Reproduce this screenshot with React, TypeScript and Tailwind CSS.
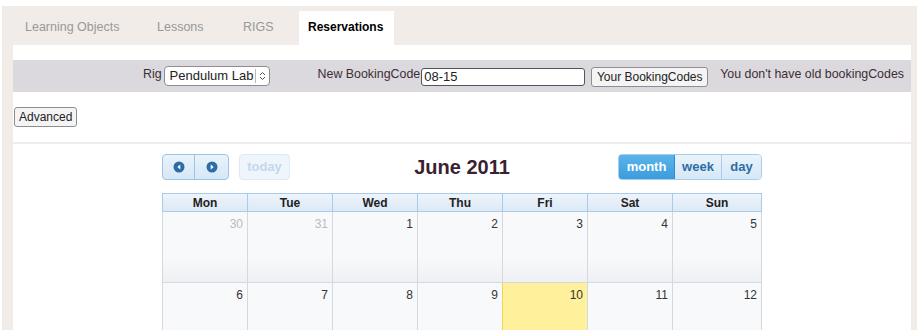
import React from "react";

const days = ["Mon", "Tue", "Wed", "Thu", "Fri", "Sat", "Sun"];
const week1 = [
  { n: 30, other: true },
  { n: 31, other: true },
  { n: 1 },
  { n: 2 },
  { n: 3 },
  { n: 4 },
  { n: 5 },
];
const week2 = [
  { n: 6 },
  { n: 7 },
  { n: 8 },
  { n: 9 },
  { n: 10, today: true },
  { n: 11 },
  { n: 12 },
];

function Cell({ n, other, today, last }: { n: number; other?: boolean; today?: boolean; last?: boolean }) {
  return (
    <div
      className={
        "h-[71px] border-b border-l border-[#d5d8dc] text-right pr-[4px] pt-[3px] text-[12px] " +
        (last ? "border-r " : "") +
        (today
          ? "bg-[#fff09c] border-[#f2d54a] "
          : "bg-[linear-gradient(to_bottom,#f8f9fb_62%,#eef1f4_100%)] ") +
        (other ? "text-[#bbbbbb]" : "text-[#333]")
      }
    >
      {n}
    </div>
  );
}

export default function App() {
  return (
    <div className="w-[922px] h-[330px] bg-white overflow-hidden font-['Liberation_Sans',Arial,sans-serif]">
      <div className="ml-[2px] mt-[6px] w-[915px] h-[324px] bg-[#f1ece8]">
        {/* tabs */}
        <div className="flex items-end h-[39px] pl-[14px]">
          <div className="w-[112px] h-[34px] pl-[9px] pt-[7px] text-[12.5px] text-[#999] whitespace-nowrap">Learning Objects</div>
          <div className="ml-[20px] w-[67px] h-[34px] pl-[9px] pt-[7px] text-[12.5px] text-[#999]">Lessons</div>
          <div className="ml-[19px] w-[47px] h-[34px] pl-[9px] pt-[7px] text-[12.5px] text-[#999]">RIGS</div>
          <div className="ml-[18px] w-[95px] h-[34px] pl-[9px] pt-[7px] bg-white text-[12px] text-black font-bold">Reservations</div>
        </div>
        {/* panel */}
        <div className="ml-[11px] w-[898px] h-[285px] bg-white pt-[15px]">
          <div className="h-[32px] bg-[#dbd9de] flex items-center justify-end pr-[7px] text-[12.4px] text-[#3b2e35]">
            <span className="-mt-[4px]">Rig</span>
            <div className="ml-[2px] w-[106px] h-[20px] border border-[#8e8e8e] rounded-[4px] bg-white flex items-center pl-[5px] text-[13px] text-[#222]">
              <span className="whitespace-nowrap">Pendulum Lab</span>
              <span className="ml-auto mr-[3px] h-[14px] border-l border-[#bbb] pl-[3px] flex items-center">
                <svg width="7" height="10" viewBox="0 0 7 10">
                  <path d="M1 4 L3.5 1.5 L6 4" fill="none" stroke="#555" strokeWidth="1" />
                  <path d="M1 6 L3.5 8.5 L6 6" fill="none" stroke="#555" strokeWidth="1" />
                </svg>
              </span>
            </div>
            <span className="ml-[48px] -mt-[4px]">New BookingCode</span>
            <div className="ml-[1px] w-[164px] h-[18px] border border-[#555] rounded-[3px] bg-white flex items-center pl-[2px] text-[13px] text-[#222] mt-[2px]">
              08-15
            </div>
            <div className="ml-[6px] w-[117px] h-[20px] border border-[#8e8e8e] rounded-[3px] bg-[#f4f4f4] flex items-center justify-center text-[12px] text-[#222] mt-[2px] whitespace-nowrap">
              Your BookingCodes
            </div>
            <span className="ml-[12px] -mt-[4px] whitespace-nowrap">You don't have old bookingCodes</span>
          </div>
          <div className="h-[50px] flex items-center pl-[1px]">
            <div className="h-[20px] px-[4px] border border-[#8e8e8e] rounded-[3px] bg-[#f4f4f4] flex items-center text-[12px] text-[#222]">
              Advanced
            </div>
          </div>
          <div className="h-[2px] bg-[#f1ece8]" />
          {/* calendar */}
          <div className="w-[600px] mx-auto mt-[10px]">
            <div className="relative h-[26px] flex items-center">
              <div className="flex h-[26px] border border-[#9ec5e6] rounded-[4px] bg-[linear-gradient(to_bottom,#e9f3fb,#d6e7f6)] overflow-hidden">
                <div className="w-[32px] flex items-center justify-center border-r border-[#9ec5e6]">
                  <svg width="12" height="12" viewBox="0 0 12 12">
                    <circle cx="6" cy="6" r="5.5" fill="#2d6ca6" />
                    <path d="M7.3 3.6 L4.3 6 L7.3 8.4 Z" fill="white" />
                  </svg>
                </div>
                <div className="w-[33px] flex items-center justify-center">
                  <svg width="12" height="12" viewBox="0 0 12 12">
                    <circle cx="6" cy="6" r="5.5" fill="#2d6ca6" />
                    <path d="M4.7 3.6 L7.7 6 L4.7 8.4 Z" fill="white" />
                  </svg>
                </div>
              </div>
              <div className="ml-[10px] h-[26px] w-[51px] border border-[#dde9f5] rounded-[4px] bg-[#eef5fb] flex items-center justify-center text-[13px] font-bold text-[#c3d8ea]">
                today
              </div>
              <div className="absolute left-0 right-0 text-center text-[20px] font-bold text-[#3c1f31] pointer-events-none">
                June 2011
              </div>
              <div className="ml-auto flex h-[26px] rounded-[4px] overflow-hidden border border-[#a9cdea] text-[13px] font-bold">
                <div className="w-[57px] -m-[1px] mr-0 border border-[#2f8ad2] rounded-l-[4px] bg-[linear-gradient(to_bottom,#5ab4ea,#3b9ddc)] text-white flex items-center justify-center">
                  month
                </div>
                <div className="w-[47px] bg-[linear-gradient(to_bottom,#e9f3fb,#d6e7f6)] text-[#2d6ca6] flex items-center justify-center border-r border-[#a9cdea]">
                  week
                </div>
                <div className="w-[39px] bg-[linear-gradient(to_bottom,#e9f3fb,#d6e7f6)] text-[#2d6ca6] flex items-center justify-center">
                  day
                </div>
              </div>
            </div>
            <div className="mt-[13px] grid grid-cols-[85px_85px_85px_85px_85px_85px_90px]">
              {days.map((d, i) => (
                <div
                  key={d}
                  className={
                    "h-[19px] border-t border-b border-l border-[#a9cbe8] bg-[linear-gradient(to_bottom,#edf4fb,#dce9f6)] flex items-center justify-center text-[12px] font-bold text-[#222] " +
                    (i === 6 ? "border-r" : "")
                  }
                >
                  {d}
                </div>
              ))}
              {week1.map((c, i) => (
                <Cell key={"a" + i} n={c.n} other={c.other} last={i === 6} />
              ))}
              {week2.map((c, i) => (
                <Cell key={"b" + i} n={c.n} today={c.today} last={i === 6} />
              ))}
            </div>
          </div>
        </div>
      </div>
    </div>
  );
}
